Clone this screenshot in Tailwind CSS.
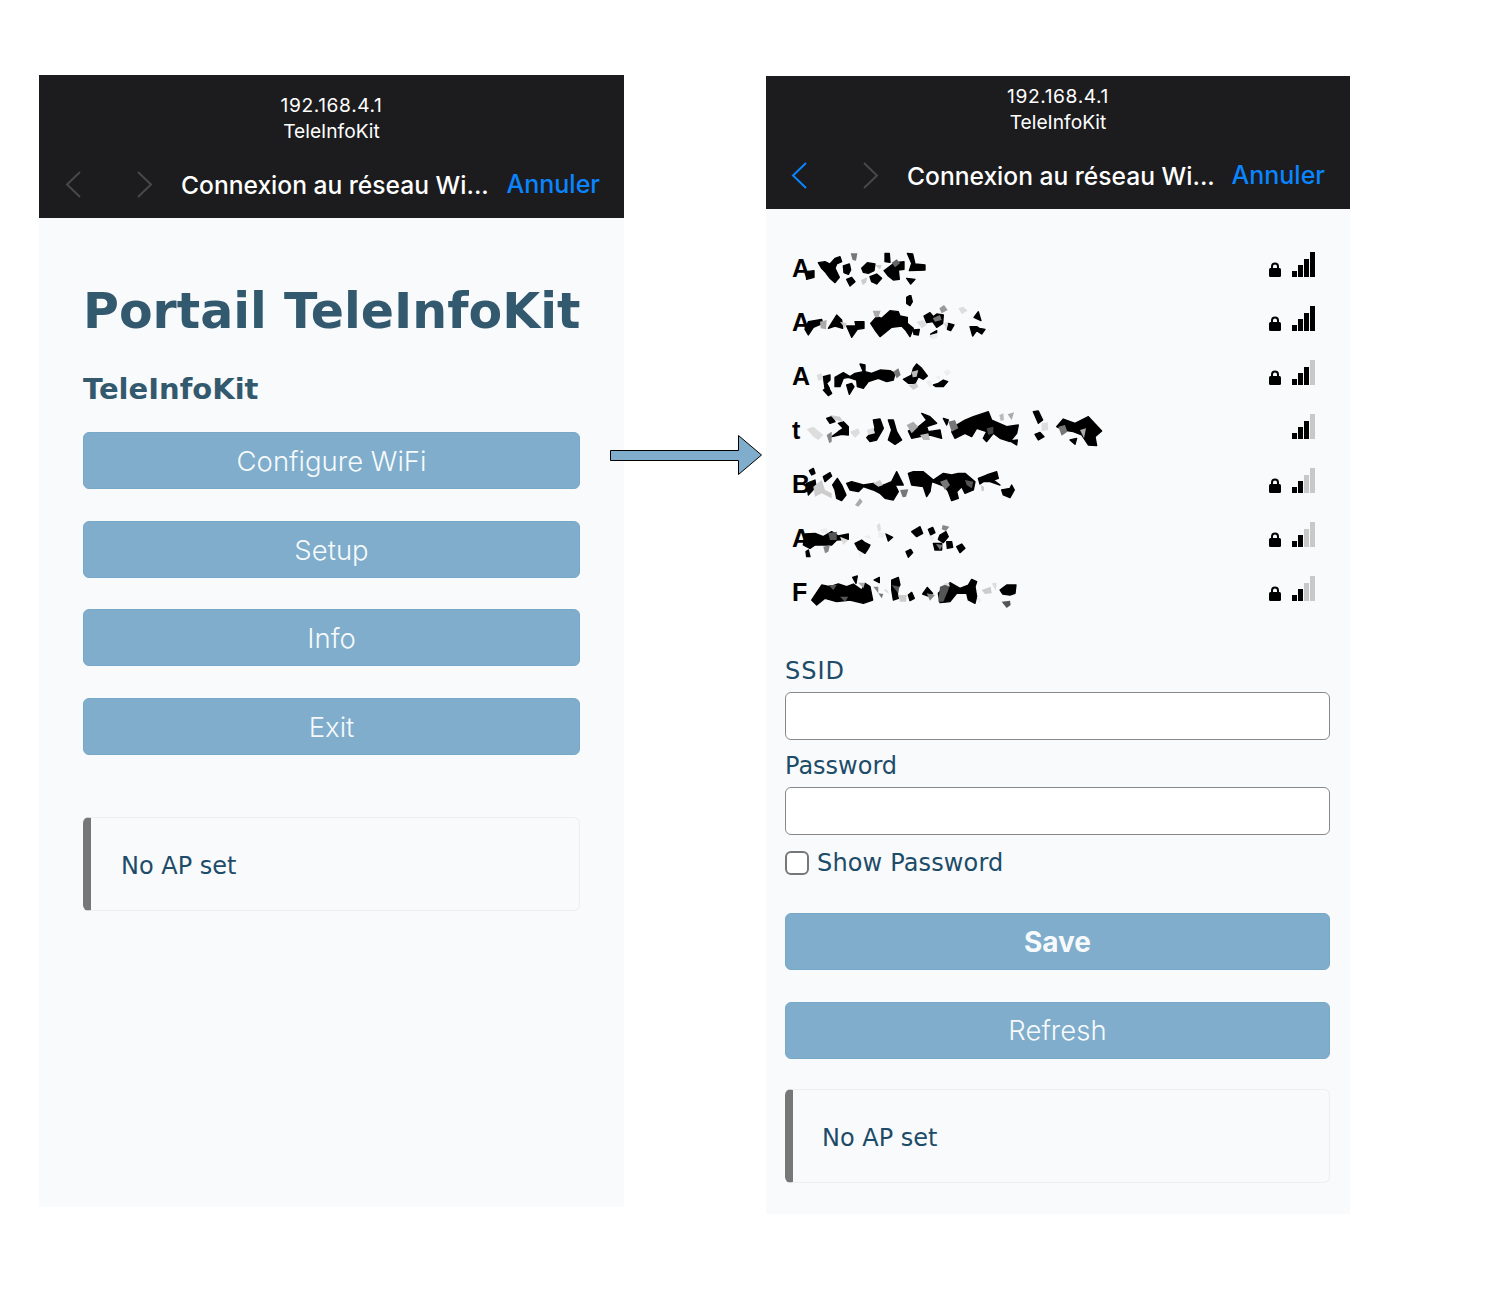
<!DOCTYPE html>
<html lang="en">
<head>
    <meta charset="UTF-8">
    <meta name="viewport" content="width=device-width, initial-scale=1.0">
    <title>Portail TeleInfoKit</title>
    <script src="https://cdn.jsdelivr.net/npm/@tailwindcss/browser@4"></script>
</head>
<body class="bg-white">
<div class="relative w-[1500px] h-[1300px] flex items-start pt-[75px] pl-[39px] gap-[142px] font-['DejaVu_Sans',sans-serif]">

    <!-- Menu screen -->
    <div class="w-[585px] h-[1132px] bg-[#f9fafc]">
        <div class="h-[143px] bg-[#1c1c1e] pt-[17px] text-white font-['Inter',sans-serif]">
            <p class="text-center text-[19.200px] leading-[26px] tracking-[0.600px]">192.168.4.1</p>
            <p class="text-center text-[19.200px] leading-[26px]">TeleInfoKit</p>
            <div class="mt-[7px] h-[66px] flex items-center pl-[26px] pr-[24px]">
                <svg class="w-[16px] h-[27px] text-[#48484a]" viewBox="0 0 16 27" fill="none" stroke="currentColor" stroke-width="2"><path d="M15 1 2 13.500 15 26"/></svg>
                <svg class="ml-[56px] w-[16px] h-[27px] text-[#48484a]" viewBox="0 0 16 27" fill="none" stroke="currentColor" stroke-width="2"><path d="M1 1 14 13.500 1 26"/></svg>
                <span class="ml-[28px] mt-[2px] text-[24.600px] font-medium whitespace-nowrap">Connexion au réseau Wi...</span>
                <span class="ml-auto mt-[2px] text-[25px] font-medium text-[#0a84ff]">Annuler</span>
            </div>
        </div>
        <div class="px-[44px] pt-[61px]">
            <h1 class="text-[49px] leading-[66px] font-bold text-[#33596f] whitespace-nowrap">Portail TeleInfoKit</h1>
            <h3 class="mt-[26px] text-[29px] leading-[36px] font-bold text-[#33596f]">TeleInfoKit</h3>
            <div class="mt-[25px] flex flex-col gap-[31.700px] font-['Inter',sans-serif]">
                <button class="h-[57px] pt-[2px] rounded-md border border-[#78a8c7] bg-[#7fadcb] text-[27.500px] font-light text-[#f6fafc]">Configure WiFi</button>
                <button class="h-[57px] pt-[2px] rounded-md border border-[#78a8c7] bg-[#7fadcb] text-[27.500px] font-light text-[#f6fafc]">Setup</button>
                <button class="h-[57px] pt-[2px] rounded-md border border-[#78a8c7] bg-[#7fadcb] text-[27.500px] font-light text-[#f6fafc]">Info</button>
                <button class="h-[57px] pt-[2px] rounded-md border border-[#78a8c7] bg-[#7fadcb] text-[27.500px] font-light text-[#f6fafc]">Exit</button>
            </div>
            <div class="mt-[62px] h-[94px] flex items-center pl-[30px] pt-[3px] rounded-md border border-[#eeeeee] border-l-[8px] border-l-[#777777] text-[24px] text-[#1d4c69]">No AP set</div>
        </div>
    </div>

    <!-- WiFi screen -->
    <div class="mt-px w-[584px] h-[1138px] bg-[#f9fafc]">
        <div class="h-[133px] bg-[#1c1c1e] pt-[7px] text-white font-['Inter',sans-serif]">
            <p class="text-center text-[19.200px] leading-[26px] tracking-[0.600px]">192.168.4.1</p>
            <p class="text-center text-[19.200px] leading-[26px]">TeleInfoKit</p>
            <div class="mt-[7px] h-[66px] flex items-center pl-[25px] pr-[25px]">
                <svg class="w-[16px] h-[27px] text-[#0a84ff]" viewBox="0 0 16 27" fill="none" stroke="currentColor" stroke-width="2"><path d="M15 1 2 13.500 15 26"/></svg>
                <svg class="ml-[56px] w-[16px] h-[27px] text-[#48484a]" viewBox="0 0 16 27" fill="none" stroke="currentColor" stroke-width="2"><path d="M1 1 14 13.500 1 26"/></svg>
                <span class="ml-[28px] mt-[2px] text-[24.600px] font-medium whitespace-nowrap">Connexion au réseau Wi...</span>
                <span class="ml-auto mt-[2px] text-[25px] font-medium text-[#0a84ff]">Annuler</span>
            </div>
        </div>
        <div class="pl-[19px] pr-[20px] pt-[32px]">
            <!-- Network list, names are scrambled in the picture -->
            <div class="font-['Liberation_Sans',sans-serif]">
                <div class="relative h-[54px] flex items-end justify-between pb-[18px] pl-[7px] pr-[14px]">
                    <span class="text-[25px] leading-none font-bold text-black mb-[-4px]">A</span>
                    <svg class="absolute top-0 left-[-5px] w-[340px] h-[54px]" viewBox="0 3 1020 162">
                        <g fill="#000" stroke="#000" stroke-width="4" stroke-linejoin="round"><polygon points="115,68 135,65 150,72 165,55 180,50 185,65 170,72 165,85 178,112 165,128 150,115 135,95 125,85"/><polygon points="190,78 208,72 212,90 205,103 192,98"/><polygon points="200,118 215,112 225,125 210,138"/><polygon points="245,85 262,68 285,72 282,92 265,100 250,97"/><polygon points="270,110 290,102 305,115 290,132 275,125"/><polygon points="312,92 335,75 345,68 372,65 372,88 355,90 358,118 340,120 325,108"/><polygon points="315,40 328,40 330,67 315,65"/><polygon points="382,40 398,42 405,72 435,75 435,90 388,92 395,70"/><polygon points="380,115 405,118 392,132"/><polygon points="78,95 102,92 102,112 80,118"/></g>
                        <polygon fill="#777" points="212,40 232,40 228,62 218,60"/><polygon fill="#ccc" points="285,75 305,75 300,88"/><polygon fill="#ccc" points="243,120 262,112 258,128 248,135"/><polygon fill="#666" points="335,68 350,58 360,70 345,82"/>
                    </svg>
                    <div class="flex items-end gap-[11px]">
                        <svg class="w-[12px] h-[15px]" viewBox="0 0 12 15"><path d="M3 6V4.500a3 3 0 0 1 6 0V6" fill="none" stroke="#000" stroke-width="2"/><rect y="6" width="12" height="9" rx="1.500"/></svg>
                        <svg class="w-[24px] h-[25px]" viewBox="0 0 24 25"><rect x="0" y="19" width="5" height="6"/><rect x="6" y="13" width="5" height="12"/><rect x="12" y="7" width="5" height="18"/><rect x="18" y="0" width="5" height="25"/></svg>
                    </div>
                </div>
                <div class="relative h-[54px] flex items-end justify-between pb-[18px] pl-[7px] pr-[14px]">
                    <span class="text-[25px] leading-none font-bold text-black mb-[-4px]">A</span>
                    <svg class="absolute top-0 left-[-5px] w-[340px] h-[54px]" viewBox="0 165 1020 162">
                        <g fill="#000" stroke="#000" stroke-width="4" stroke-linejoin="round"><polygon points="380,172 392,165 397,185 390,197 380,190"/><polygon points="75,268 85,245 125,238 128,250 100,262 85,285"/><polygon points="145,265 170,225 185,240 188,265 165,258"/><polygon points="200,258 228,258 225,245 252,245 252,265 232,268 215,292"/><polygon points="272,250 290,230 305,235 330,212 355,215 360,228 382,232 382,250 400,265 390,290 378,272 365,258 335,262 300,290 285,270"/><polygon points="400,270 418,268 415,285 402,283"/><polygon points="432,228 450,218 460,230 470,222 490,225 488,250 470,262 458,245 440,248"/><polygon points="505,250 522,255 512,272 502,268"/><polygon points="452,282 470,272 470,280 455,292"/><polygon points="582,232 595,215 603,242"/><polygon points="570,260 590,260 598,265 615,268 605,282 590,272 578,288"/></g>
                        <polygon fill="#aaa" points="278,212 302,212 295,232 285,232"/><polygon fill="#999" points="478,205 492,195 503,210 485,220"/><polygon fill="#ddd" points="535,205 550,200 563,212 545,222"/><polygon fill="#aaa" points="120,245 140,240 138,268 122,265"/><polygon fill="#ccc" points="180,245 200,250 195,265"/><polygon fill="#ddd" points="410,245 430,240 440,255 425,265"/><polygon fill="#777" points="458,235 480,225 485,240 465,245"/><polygon fill="#ddd" points="490,250 505,245 500,270"/><polygon fill="#eee" points="450,285 475,278 470,295 455,298"/>
                    </svg>
                    <div class="flex items-end gap-[11px]">
                        <svg class="w-[12px] h-[15px]" viewBox="0 0 12 15"><path d="M3 6V4.500a3 3 0 0 1 6 0V6" fill="none" stroke="#000" stroke-width="2"/><rect y="6" width="12" height="9" rx="1.500"/></svg>
                        <svg class="w-[24px] h-[25px]" viewBox="0 0 24 25"><rect x="0" y="19" width="5" height="6"/><rect x="6" y="13" width="5" height="12"/><rect x="12" y="7" width="5" height="18"/><rect x="18" y="0" width="5" height="25"/></svg>
                    </div>
                </div>
                <div class="relative h-[54px] flex items-end justify-between pb-[18px] pl-[7px] pr-[14px]">
                    <span class="text-[25px] leading-none font-bold text-black mb-[-4px]">A</span>
                    <svg class="absolute top-0 left-[-5px] w-[340px] h-[54px]" viewBox="0 327 1020 162">
                        <g fill="#000" stroke="#000" stroke-width="4" stroke-linejoin="round"><polygon points="130,410 150,405 150,420 140,430 148,445 135,445"/><polygon points="165,412 190,398 210,410 225,400 250,395 240,372 255,375 255,395 275,400 300,390 330,392 345,400 340,420 320,425 295,415 265,425 250,445 232,440 230,420 205,412 190,415 180,440 165,440"/><polygon points="130,450 145,442 155,460 145,467"/><polygon points="200,435 215,430 222,440 208,463"/><polygon points="370,418 395,405 400,385 410,372 425,385 442,408 430,418 415,410 405,430 385,430"/><polygon points="460,435 475,430 490,420 503,425 490,440 468,440"/></g>
                        <polygon fill="#ddd" points="110,405 125,400 130,418 115,422"/><polygon fill="#777" points="340,395 355,385 362,405 350,415"/><polygon fill="#bbb" points="395,395 415,390 410,410 398,412"/><polygon fill="#ccc" points="385,435 410,430 415,440 400,450"/><polygon fill="#eee" points="490,395 505,388 513,398 500,408"/><polygon fill="#eee" points="438,425 450,420 458,435 448,442"/><polygon fill="#eee" points="465,410 480,408 480,420"/>
                    </svg>
                    <div class="flex items-end gap-[11px]">
                        <svg class="w-[12px] h-[15px]" viewBox="0 0 12 15"><path d="M3 6V4.500a3 3 0 0 1 6 0V6" fill="none" stroke="#000" stroke-width="2"/><rect y="6" width="12" height="9" rx="1.500"/></svg>
                        <svg class="w-[24px] h-[25px]" viewBox="0 0 24 25"><rect x="0" y="19" width="5" height="6"/><rect x="6" y="13" width="5" height="12"/><rect x="12" y="7" width="5" height="18"/><rect x="18" y="0" width="5" height="25" fill="#c8c8c8"/></svg>
                    </div>
                </div>
                <div class="relative h-[54px] flex items-end justify-between pb-[18px] pl-[7px] pr-[14px]">
                    <span class="text-[25px] leading-none font-bold text-black mb-[-4px]">t</span>
                    <svg class="absolute top-0 left-[-5px] w-[340px] h-[54px]" viewBox="0 -6 1020 162">
                        <g fill="#000" stroke="#000" stroke-width="4" stroke-linejoin="round"><polygon points="140,40 155,35 165,50 150,55"/><polygon points="175,55 190,50 205,65 205,90 185,88 170,92 155,95 175,80 190,70"/><polygon points="280,45 300,42 310,70 290,105 270,110 260,98 285,70"/><polygon points="325,45 340,45 350,80 365,105 345,118 325,105 335,75"/><polygon points="385,78 410,70 440,45 425,25 450,35 470,55 440,65 445,80 480,75 485,100 450,90 420,95 395,100"/><polygon points="490,40 505,45 500,60"/><polygon points="515,80 530,60 555,45 580,35 625,20 635,45 680,65 715,60 710,85 690,110 660,100 640,85 620,110 610,100 620,80 590,70 575,95 555,85 525,100"/><polygon points="690,108 712,105 710,120"/><polygon points="760,20 775,18 788,45 775,55"/><polygon points="765,88 780,82 792,95 775,105"/><polygon points="830,65 850,42 885,55 925,35 965,78 945,95 950,122 925,120 905,90 880,80 850,75"/><polygon points="870,105 890,100 885,118"/></g>
                        <polygon fill="#ddd" points="80,72 100,65 130,90 115,105 100,95"/><polygon fill="#ccc" points="150,30 180,35 190,50 165,45"/><polygon fill="#888" points="140,90 155,80 155,110 148,115"/><polygon fill="#ddd" points="210,80 235,70 240,85 225,98"/><polygon fill="#ddd" points="260,75 280,68 285,85 265,90"/><polygon fill="#aaa" points="380,60 400,50 415,65 395,85"/><polygon fill="#bbb" points="420,90 445,85 450,105 430,105"/><polygon fill="#777" points="505,50 525,45 535,70 515,80"/><polygon fill="#bbb" points="658,30 670,25 672,45 662,48"/><polygon fill="#aaa" points="683,28 702,22 695,45"/><polygon fill="#ddd" points="785,55 803,52 805,75 785,78"/><polygon fill="#777" points="835,65 855,60 862,80 845,92"/><polygon fill="#aaa" points="900,75 918,70 912,100"/><polygon fill="#444" points="620,70 640,65 640,85 625,90"/>
                    </svg>
                    <div class="flex items-end gap-[11px]">
                        <svg class="w-[24px] h-[25px]" viewBox="0 0 24 25"><rect x="0" y="19" width="5" height="6"/><rect x="6" y="13" width="5" height="12"/><rect x="12" y="7" width="5" height="18"/><rect x="18" y="0" width="5" height="25" fill="#c8c8c8"/></svg>
                    </div>
                </div>
                <div class="relative h-[54px] flex items-end justify-between pb-[18px] pl-[7px] pr-[14px]">
                    <span class="text-[25px] leading-none font-bold text-black mb-[-4px]">B</span>
                    <svg class="absolute top-0 left-[-5px] w-[340px] h-[54px]" viewBox="0 81 1020 162">
                        <g fill="#000" stroke="#000" stroke-width="4" stroke-linejoin="round"><polygon points="88,122 100,115 105,130 95,135"/><polygon points="130,140 150,128 155,138 135,155"/><polygon points="80,160 105,150 108,170 85,195"/><polygon points="158,165 172,145 185,165 198,195 185,212 170,205 165,180"/><polygon points="200,160 215,155 250,165 280,160 310,165 335,155 350,125 370,165 345,165 355,185 340,210 315,205 300,190 280,180 250,170 235,185 210,180"/><polygon points="385,130 400,125 430,125 460,150 490,130 515,135 535,130 555,130 585,155 580,180 555,190 545,170 530,185 535,205 515,212 505,185 495,170 470,160 455,155 450,185 440,200 430,170 395,165"/><polygon points="595,145 620,135 650,125 655,145 640,150 660,165 630,155 610,155 600,162"/><polygon points="665,180 690,175 695,165 703,180 690,203 670,195"/></g>
                        <polygon fill="#ccc" points="100,170 125,150 135,180 155,190 155,205 125,190 105,200"/><polygon fill="#ccc" points="280,160 300,150 310,165 295,170"/><polygon fill="#777" points="360,180 385,178 378,200 368,202"/><polygon fill="#aaa" points="225,225 240,205 248,215 235,230"/><polygon fill="#777" points="480,155 500,148 510,165 495,180"/><polygon fill="#555" points="555,150 580,155 575,175 560,165"/><polygon fill="#ccc" points="602,165 612,170 612,182 605,184"/>
                    </svg>
                    <div class="flex items-end gap-[11px]">
                        <svg class="w-[12px] h-[15px]" viewBox="0 0 12 15"><path d="M3 6V4.500a3 3 0 0 1 6 0V6" fill="none" stroke="#000" stroke-width="2"/><rect y="6" width="12" height="9" rx="1.500"/></svg>
                        <svg class="w-[24px] h-[25px]" viewBox="0 0 24 25"><rect x="0" y="19" width="5" height="6"/><rect x="6" y="13" width="5" height="12"/><rect x="12" y="7" width="5" height="18" fill="#c8c8c8"/><rect x="18" y="0" width="5" height="25" fill="#c8c8c8"/></svg>
                    </div>
                </div>
                <div class="relative h-[54px] flex items-end justify-between pb-[18px] pl-[7px] pr-[14px]">
                    <span class="text-[25px] leading-none font-bold text-black mb-[-4px]">A</span>
                    <svg class="absolute top-0 left-[-5px] w-[340px] h-[54px]" viewBox="0 243 1020 162">
                        <g fill="#000" stroke="#000" stroke-width="4" stroke-linejoin="round"><polygon points="75,312 105,310 130,320 155,305 175,318 205,312 205,328 170,330 155,345 130,345 105,345 90,355 70,345"/><polygon points="78,365 85,360 90,380 80,380"/><polygon points="225,340 245,330 255,338 270,345 265,355 255,370 235,358"/><polygon points="318,312 338,322 325,333"/><polygon points="395,305 420,290 428,310 410,320"/><polygon points="445,298 458,292 465,308 452,315"/><polygon points="480,315 498,305 505,320 490,338 475,328"/><polygon points="500,335 515,335 518,352 502,355"/><polygon points="530,350 545,342 555,355 540,368"/><polygon points="378,365 392,358 398,368 385,382"/><polygon points="460,340 485,340 485,360 465,360"/></g>
                        <polygon fill="#eee" points="120,298 140,295 145,308 125,310"/><polygon fill="#888" points="130,350 150,345 145,365 135,370"/><polygon fill="#555" points="145,310 170,305 170,330 150,330"/><polygon fill="#ddd" points="290,285 300,280 303,300 295,305"/><polygon fill="#eee" points="295,305 315,310 310,325 295,322"/><polygon fill="#eee" points="250,320 270,315 272,328"/><polygon fill="#eee" points="235,365 248,370 240,385"/><polygon fill="#777" points="468,342 488,345 480,360"/><polygon fill="#888" points="488,285 508,290 498,303 485,298"/><polygon fill="#eee" points="445,315 465,322 455,335"/><polygon fill="#ddd" points="180,320 205,330 190,345"/>
                    </svg>
                    <div class="flex items-end gap-[11px]">
                        <svg class="w-[12px] h-[15px]" viewBox="0 0 12 15"><path d="M3 6V4.500a3 3 0 0 1 6 0V6" fill="none" stroke="#000" stroke-width="2"/><rect y="6" width="12" height="9" rx="1.500"/></svg>
                        <svg class="w-[24px] h-[25px]" viewBox="0 0 24 25"><rect x="0" y="19" width="5" height="6"/><rect x="6" y="13" width="5" height="12"/><rect x="12" y="7" width="5" height="18" fill="#c8c8c8"/><rect x="18" y="0" width="5" height="25" fill="#c8c8c8"/></svg>
                    </div>
                </div>
                <div class="relative h-[54px] flex items-end justify-between pb-[18px] pl-[7px] pr-[14px]">
                    <span class="text-[25px] leading-none font-bold text-black mb-[-4px]">F</span>
                    <svg class="absolute top-0 left-[-5px] w-[340px] h-[54px]" viewBox="0 405 1020 162">
                        <g fill="#000" stroke="#000" stroke-width="4" stroke-linejoin="round"><polygon points="95,510 125,465 150,470 175,462 200,470 220,462 245,480 255,460 270,470 278,510 250,520 210,510 170,515 135,505 110,525"/><polygon points="218,442 232,438 228,460"/><polygon points="282,450 298,442 298,458"/><polygon points="335,450 355,442 360,465 350,480 355,505 340,510 335,480"/><polygon points="385,495 395,487 403,505 390,512"/><polygon points="428,492 442,472 458,490 445,498"/><polygon points="475,490 495,470 510,458 540,475 565,465 575,448 590,455 585,470 590,500 585,520 565,510 560,490 530,490 510,515 480,518"/><polygon points="660,480 680,465 708,465 705,490 690,495 668,492"/></g>
                        <polygon fill="#555" points="145,465 170,465 160,480"/><polygon fill="#aaa" points="235,458 255,458 250,475"/><polygon fill="#888" points="280,470 295,470 295,490"/><polygon fill="#777" points="295,490 310,492 305,505"/><polygon fill="#ddd" points="310,480 320,478 328,492"/><polygon fill="#ccc" points="355,495 380,495 378,515 360,515"/><polygon fill="#555" points="335,465 358,470 355,490"/><polygon fill="#888" points="440,490 465,495 450,512"/><polygon fill="#555" points="480,470 510,458 505,480 490,515 475,515"/><polygon fill="#ddd" points="488,462 505,458 510,470"/><polygon fill="#ccc" points="605,480 632,470 635,490 615,492"/><polygon fill="#ddd" points="635,460 650,458 648,482"/><polygon fill="#555" points="665,515 690,512 692,525 680,534"/><polygon fill="#eee" points="590,500 605,510 598,520"/><polygon fill="#555" points="180,500 205,500 195,515"/>
                    </svg>
                    <div class="flex items-end gap-[11px]">
                        <svg class="w-[12px] h-[15px]" viewBox="0 0 12 15"><path d="M3 6V4.500a3 3 0 0 1 6 0V6" fill="none" stroke="#000" stroke-width="2"/><rect y="6" width="12" height="9" rx="1.500"/></svg>
                        <svg class="w-[24px] h-[25px]" viewBox="0 0 24 25"><rect x="0" y="19" width="5" height="6"/><rect x="6" y="13" width="5" height="12"/><rect x="12" y="7" width="5" height="18" fill="#c8c8c8"/><rect x="18" y="0" width="5" height="25" fill="#c8c8c8"/></svg>
                    </div>
                </div>
            </div>

            <!-- Form -->
            <label class="block mt-[36px] text-[24px] leading-[32px] tracking-[1px] text-[#1d4c69]">SSID</label>
            <input type="text" class="block mt-[5px] w-full h-[48px] rounded-md border-[1.500px] border-[#888888] bg-white">
            <label class="block mt-[10px] text-[24px] leading-[32px] text-[#1d4c69]">Password</label>
            <input type="password" class="block mt-[5px] w-full h-[48px] rounded-md border-[1.500px] border-[#888888] bg-white">
            <label class="mt-[14px] flex items-center gap-[8px] text-[24px] leading-[28px] tracking-[0.150px] text-[#1d4c69]">
                <input type="checkbox" class="appearance-none w-[24px] h-[24px] rounded-md border-2 border-[#777777] bg-white">
                Show Password
            </label>
            <div class="mt-[36px] flex flex-col gap-[32px] font-['Inter',sans-serif]">
                <button class="h-[57px] rounded-md border border-[#78a8c7] bg-[#7fadcb] text-[28px] font-bold text-[#f6fafc]">Save</button>
                <button class="h-[57px] rounded-md border border-[#78a8c7] bg-[#7fadcb] text-[27.500px] font-light text-[#f6fafc]">Refresh</button>
            </div>
            <div class="mt-[30px] h-[94px] flex items-center pl-[29px] pt-[3px] rounded-md border border-[#eeeeee] border-l-[8px] border-l-[#777777] text-[24px] text-[#1d4c69]">No AP set</div>
        </div>
    </div>

    <!-- Arrow between the two screens -->
    <svg class="absolute left-[609px] top-[434px] w-[154px] h-[42px]" viewBox="0 0 154 42">
        <path d="M1.500 16.500H129.500V1.500L152.500 21 129.500 40.500V26.500H1.500Z" fill="#7fadcb" stroke="#000" stroke-width="1"/>
    </svg>
</div>
</body>
</html>
